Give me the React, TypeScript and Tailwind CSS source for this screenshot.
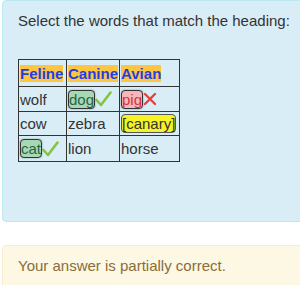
import React from "react";

const Check = () => (
  <svg width="17" height="16" viewBox="0 0 17 16" className="inline-block align-middle">
    <path d="M1.5 9 L6 14 L15.5 1.5" fill="none" stroke="#86c440" strokeWidth="2.6" strokeLinecap="round" strokeLinejoin="round" />
  </svg>
);

const Cross = () => (
  <svg width="14" height="14" viewBox="0 0 14 14" className="inline-block align-middle">
    <path d="M2 2 L12 12 M12 2 L2 12" fill="none" stroke="#e8403a" strokeWidth="2.4" strokeLinecap="round" />
  </svg>
);

export default function App() {
  const cell = "border border-[#333] pl-[1px] pr-0 py-0 align-middle whitespace-nowrap overflow-visible";
  const item = "inline-block border-[1.5px] rounded-[4px] leading-[17px] px-0";
  return (
    <div className="w-[300px] h-[285px] overflow-hidden bg-white text-[#333]" style={{ fontFamily: '"Liberation Sans", Arial, sans-serif' }}>
      <div className="w-[320px] ml-[2px]">
        <div className="h-[222px] bg-[#d9edf7] border border-[#bce8f1] rounded-[4px] pl-[15px] pt-[11px]">
          <div className="text-[15px] leading-[18px]">Select the words that match the heading:</div>
          <table className="mt-[29px] border-collapse table-fixed w-[161px] text-[15px] leading-[17px]">
            <colgroup>
              <col className="w-[48px]" />
              <col className="w-[53px]" />
              <col className="w-[60px]" />
            </colgroup>
            <tbody>
              <tr className="h-[27px]">
                <td className={cell}>
                  <span className="bg-[#fdc540] text-[#1f3fe6] font-bold">Feline</span>
                </td>
                <td className={cell}>
                  <span className="bg-[#fdc540] text-[#1f3fe6] font-bold">Canine</span>
                </td>
                <td className={cell}>
                  <span className="bg-[#fdc540] text-[#1f3fe6] font-bold">Avian</span>
                </td>
              </tr>
              <tr className="h-[25px]">
                <td className={cell}>wolf</td>
                <td className={cell}>
                  <span className="inline-flex items-center">
                    <span className={item + " border-[#333] bg-[#a6d9b3] text-[#2a6246] shadow-[0_0_2px_rgba(0,0,0,0.4)]"}>dog</span>
                    <Check />
                  </span>
                </td>
                <td className={cell}>
                  <span className="inline-flex items-center">
                    <span className={item + " border-[#333] bg-[#f5b7b9] text-[#d2343a] shadow-[0_0_2px_rgba(0,0,0,0.4)]"}>pig</span>
                    <Cross />
                  </span>
                </td>
              </tr>
              <tr className="h-[24px]">
                <td className={cell}>cow</td>
                <td className={cell}>zebra</td>
                <td className={cell}>
                  <span className={item + " border-[#555] bg-[#f5f226] text-[#333]"}>[canary]</span>
                </td>
              </tr>
              <tr className="h-[26px]">
                <td className={cell}>
                  <span className="inline-flex items-center">
                    <span className={item + " border-[#333] bg-[#a6d9b3] text-[#2a6246] shadow-[0_0_2px_rgba(0,0,0,0.4)]"}>cat</span>
                    <Check />
                  </span>
                </td>
                <td className={cell}>lion</td>
                <td className={cell}>horse</td>
              </tr>
            </tbody>
          </table>
        </div>
        <div className="mt-[23px] h-[60px] bg-[#fcf8e3] border border-[#faebcc] rounded-[4px] pl-[15px] pt-[11px]">
          <div className="text-[15px] leading-[18px] text-[#8a6d3b]">Your answer is partially correct.</div>
        </div>
      </div>
    </div>
  );
}
